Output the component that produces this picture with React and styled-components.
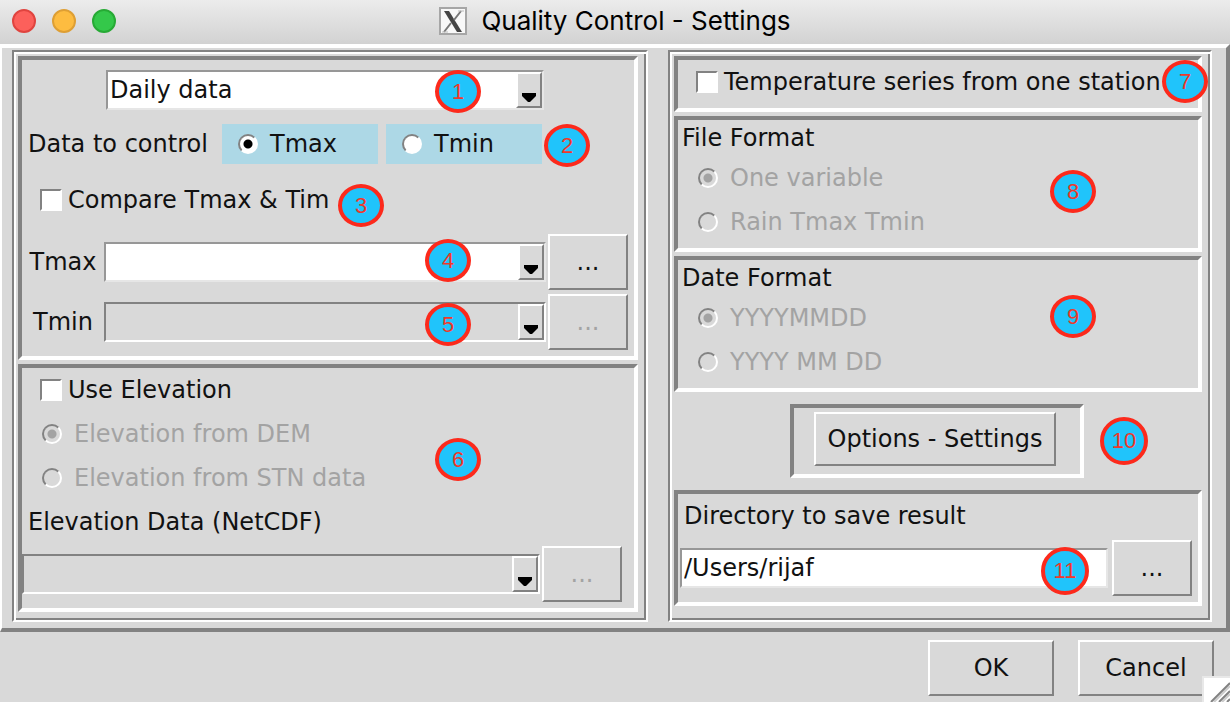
import React from "react";
import styled, { createGlobalStyle, css } from "styled-components";

const face = "#d9d9d9";
const shade = "#828282";
const muted = "#a3a3a3";

const GlobalStyle = createGlobalStyle`
  *, *::before, *::after { box-sizing: border-box; }
  body { margin: 0; background: ${face}; }
  body, button, input, select {
    font-family: "DejaVu Sans", Verdana, sans-serif;
    font-size: 24px;
    color: #111;
  }
`;

const sunken = css`
  border-style: solid;
  border-color: ${shade} #fff #fff ${shade};
`;

const raised = css`
  border-style: solid;
  border-color: #fff ${shade} ${shade} #fff;
`;

const Window = styled.main`
  display: flex;
  flex-direction: column;
  min-height: 100vh;
  background: ${face};
`;

const TitleBar = styled.header`
  display: grid;
  grid-template-columns: 1fr auto 1fr;
  align-items: center;
  height: 44px;
  padding: 0 12px 2px;
  background: linear-gradient(#ececec, #d2d2d2);
`;

const Lights = styled.div`
  display: flex;
  gap: 16px;
`;

const Light = styled.button`
  width: 24px;
  height: 24px;
  padding: 0;
  border: 2px solid ${(p) => p.$rim};
  border-radius: 50%;
  background: ${(p) => p.$fill};
`;

const Title = styled.h1`
  display: flex;
  align-items: center;
  gap: 14px;
  margin: 0;
  font: 400 26px/30px Inter, "Liberation Sans", sans-serif;
  color: #000;
`;

const Body = styled.form`
  display: grid;
  grid-template-columns: minmax(0, 636fr) minmax(0, 544fr);
  gap: 20px;
  padding: 2px 14px 6px 10px;
  border-style: solid;
  border-width: 4px 4px 4px 2px;
  border-color: #fff ${shade} ${shade} #fff;
`;

const Column = styled.section`
  ${sunken}
  border-width: 2px;
  box-shadow: inset 2px 2px #fff, inset -2px -2px ${shade};
  display: flex;
  flex-direction: column;
  gap: 4px;
  padding: 4px 8px 8px 4px;
`;

const Panel = styled.div`
  ${sunken}
  border-width: 4px;
  position: relative;
  padding-bottom: ${(p) => p.$bottom || 6}px;
`;

const Badge = styled.span`
  position: absolute;
  top: ${(p) => p.$top}px;
  right: ${(p) => p.$right}px;
  display: flex;
  align-items: center;
  justify-content: center;
  width: ${(p) => (p.$large ? 48 : 46)}px;
  height: ${(p) => (p.$large ? 48 : 43)}px;
  border: 4px solid #fc2a1c;
  border-radius: 50%;
  background: #20c4fb;
  color: #f0382a;
  font: 22px/24px "Liberation Sans", Arial, sans-serif;
  pointer-events: none;
`;

const Heading = styled.div`
  padding-left: ${(p) => p.$inset || 4}px;
  line-height: ${(p) => (p.$tight ? 36 : 44)}px;
`;

const Choice = styled.label`
  display: flex;
  align-items: center;
  gap: ${(p) => (p.$check ? 6 : 12)}px;
  height: 44px;
  padding-left: ${(p) => p.$inset || 20}px;
  color: ${(p) => (p.$off ? muted : "#111")};
  white-space: nowrap;
`;

const Radio = styled.input.attrs({ type: "radio" })`
  appearance: none;
  flex: none;
  width: 20px;
  height: 20px;
  margin: 0;
  border: 2px solid;
  border-color: ${shade} #fff #fff ${shade};
  border-radius: 50%;
  background: #fff;
  &:checked { background: radial-gradient(circle, #000 4px, #fff 5px); }
  &:disabled { background: ${face}; }
  &:disabled:checked { background: radial-gradient(circle, ${muted} 4px, ${face} 5px); }
`;

const Check = styled.input.attrs({ type: "checkbox" })`
  appearance: none;
  flex: none;
  width: 22px;
  height: 22px;
  margin: 0;
  ${sunken}
  border-width: 2px;
  background: #fff;
`;

const PeriodRow = styled.div`
  padding: 10px 90px 0 84px;
`;

const VariableRow = styled.div`
  display: flex;
  gap: 8px;
  margin: 14px 92px 14px 0;
`;

const VariableLabel = styled.span`
  flex: none;
  width: 192px;
  padding-left: 6px;
  line-height: 40px;
`;

const Variable = styled(Choice)`
  flex: 1;
  height: 40px;
  padding-left: 16px;
  background: #add8e6;
`;

const FileRow = styled.div`
  display: flex;
  align-items: center;
  margin-top: ${(p) => p.$gap}px;
  padding-right: ${(p) => p.$end}px;
  padding-left: ${(p) => p.$start || 0}px;
`;

const FileLabel = styled.label`
  flex: none;
  width: 82px;
  text-align: center;
`;

const ComboBox = styled.div`
  display: grid;
  flex: 1;
  height: 40px;
  border: 2px solid;
  border-color: ${(p) =>
    p.$off ? `${shade} #fff #fff ${shade}` : "#979797 #e6e6e6 #e6e6e6 #979797"};
  background: ${(p) => (p.$off ? face : "#fff")};
`;

const ComboSelect = styled.select`
  grid-area: 1 / 1;
  appearance: none;
  width: 100%;
  padding: 0 30px 0 2px;
  border: 0;
  background: none;
  opacity: 1;
  line-height: 36px;
`;

const ComboArrow = styled.span`
  grid-area: 1 / 1;
  justify-self: end;
  display: flex;
  align-items: flex-end;
  justify-content: center;
  width: 26px;
  height: 36px;
  padding-bottom: 4px;
  ${raised}
  border-width: 2px;
  background: ${face};
  pointer-events: none;
`;

const Entry = styled.input`
  flex: 1;
  min-width: 0;
  height: 40px;
  padding: 0 2px;
  border: 2px solid;
  border-color: #979797 #e6e6e6 #e6e6e6 #979797;
  background: #fff;
`;

const Button = styled.button`
  flex: none;
  width: ${(p) => p.$width}px;
  height: ${(p) => p.$height || 56}px;
  padding: 0;
  ${raised}
  border-width: 2px;
  background: ${face};
  &:disabled { color: ${muted}; }
`;

const Browse = styled(Button).attrs({ type: "button", $width: 80 })`
  margin-left: ${(p) => p.$gap || 2}px;
`;

const OptionsArea = styled.div`
  position: relative;
  display: flex;
  justify-content: center;
  padding: 8px 2px 8px 0;
`;

const OptionsFrame = styled.div`
  ${sunken}
  border-width: 4px;
  padding: 4px 24px 8px 20px;
`;

const Footer = styled.footer`
  position: relative;
  display: flex;
  flex: 1;
  justify-content: flex-end;
  gap: 24px;
  padding: 8px 16px 6px;
`;

const Grip = styled.svg`
  position: absolute;
  right: 0;
  bottom: 0;
`;

function Combo({ id, label, off, options = [""] }) {
  return (
    <ComboBox $off={off}>
      <ComboSelect id={id} aria-label={label} disabled={off}>
        {options.map((o) => (
          <option key={o}>{o}</option>
        ))}
      </ComboSelect>
      <ComboArrow>
        <svg width="14" height="9" viewBox="0 0 14 9" aria-hidden="true">
          <path d="M0 0H14V3L8 9H6L0 3Z" />
        </svg>
      </ComboArrow>
    </ComboBox>
  );
}

function XLogo() {
  return (
    <svg width="28" height="28" viewBox="0 0 28 28" aria-hidden="true">
      <rect x="1" y="1" width="26" height="26" fill="#f8f8f8" stroke="#a6a6a6" strokeWidth="2" />
      <path d="M5 4H10L23 25H18Z" fill="#444" />
      <path d="M22 4L15 13M12 16L5 25" stroke="#777" strokeWidth="2" fill="none" />
      <path d="M3 25H9M19 4H25" stroke="#bbb" strokeWidth="1" />
    </svg>
  );
}

export default function App() {
  return (
    <Window>
      <GlobalStyle />
      <TitleBar>
        <Lights>
          <Light aria-label="Close" $fill="#fc605b" $rim="#e0443f" />
          <Light aria-label="Minimize" $fill="#fdbc40" $rim="#de9f34" />
          <Light aria-label="Zoom" $fill="#34c84a" $rim="#27aa35" />
        </Lights>
        <Title>
          <XLogo />
          Quality Control - Settings
        </Title>
      </TitleBar>

      <Body id="settings">
        <Column>
          <Panel>
            <PeriodRow>
              <Combo label="Time step" options={["Daily data"]} />
            </PeriodRow>
            <VariableRow role="radiogroup" aria-labelledby="variable">
              <VariableLabel id="variable">Data to control</VariableLabel>
              <Variable>
                <Radio name="variable" defaultChecked />
                Tmax
              </Variable>
              <Variable>
                <Radio name="variable" />
                Tmin
              </Variable>
            </VariableRow>
            <Choice $check $inset={18}>
              <Check />
              Compare Tmax &amp; Tim
            </Choice>
            <FileRow $gap={12} $end={6}>
              <FileLabel htmlFor="tmax">Tmax</FileLabel>
              <Combo id="tmax" />
              <Browse aria-label="Browse Tmax">...</Browse>
            </FileRow>
            <FileRow $gap={4} $end={6}>
              <FileLabel htmlFor="tmin">Tmin</FileLabel>
              <Combo id="tmin" off />
              <Browse aria-label="Browse Tmin" disabled>...</Browse>
            </FileRow>
            <Badge $top={10} $right={153}>1</Badge>
            <Badge $top={64} $right={44}>2</Badge>
            <Badge $top={124} $right={250}>3</Badge>
            <Badge $top={179} $right={163}>4</Badge>
            <Badge $top={243} $right={163}>5</Badge>
          </Panel>

          <Panel>
            <Choice $check $inset={18}>
              <Check />
              Use Elevation
            </Choice>
            <Choice $off>
              <Radio name="elevation" disabled defaultChecked />
              Elevation from DEM
            </Choice>
            <Choice $off>
              <Radio name="elevation" disabled />
              Elevation from STN data
            </Choice>
            <Heading $inset={6}>
              <label htmlFor="netcdf">Elevation Data (NetCDF)</label>
            </Heading>
            <FileRow $gap={2} $end={12}>
              <Combo id="netcdf" off />
              <Browse aria-label="Browse elevation data" disabled>...</Browse>
            </FileRow>
            <Badge $top={70} $right={153}>6</Badge>
          </Panel>
        </Column>

        <Column>
          <Panel $bottom={4}>
            <Choice $check $inset={18}>
              <Check />
              Temperature series from one station
            </Choice>
            <Badge $top={0} $right={-10}>7</Badge>
          </Panel>

          <Panel $bottom={4} role="radiogroup" aria-labelledby="file-format">
            <Heading $tight id="file-format">File Format</Heading>
            <Choice $off>
              <Radio name="file" disabled defaultChecked />
              One variable
            </Choice>
            <Choice $off>
              <Radio name="file" disabled />
              Rain Tmax Tmin
            </Choice>
            <Badge $top={50} $right={102}>8</Badge>
          </Panel>

          <Panel $bottom={4} role="radiogroup" aria-labelledby="date-format">
            <Heading $tight id="date-format">Date Format</Heading>
            <Choice $off>
              <Radio name="date" disabled defaultChecked />
              YYYYMMDD
            </Choice>
            <Choice $off>
              <Radio name="date" disabled />
              YYYY MM DD
            </Choice>
            <Badge $top={35} $right={102}>9</Badge>
          </Panel>

          <OptionsArea>
            <OptionsFrame>
              <Button type="button" $width={242} $height={54}>Options - Settings</Button>
            </OptionsFrame>
            <Badge $large $top={21} $right={54}>10</Badge>
          </OptionsArea>

          <Panel>
            <Heading $inset={6}>
              <label htmlFor="directory">Directory to save result</label>
            </Heading>
            <FileRow $gap={2} $start={2} $end={6}>
              <Entry id="directory" defaultValue="/Users/rijaf" />
              <Browse $gap={4} aria-label="Browse directory">...</Browse>
            </FileRow>
            <Badge $large $top={53} $right={109}>11</Badge>
          </Panel>
        </Column>
      </Body>

      <Footer>
        <Button form="settings" type="button" $width={126}>OK</Button>
        <Button form="settings" type="button" $width={136}>Cancel</Button>
        <Grip width="28" height="26" viewBox="0 0 28 26" aria-hidden="true">
          <path d="M0 0H28V26H0Z" fill="#e8e8e8" />
          <path d="M2 2H28V26H2Z" fill="#fff" />
          <path d="M12 26L28 10M20 26L28 18" stroke="#ccc" strokeWidth="2" />
          <path d="M9 26L28 7M17 26L28 15M25 26L28 23" stroke="#828282" strokeWidth="2" />
        </Grip>
      </Footer>
    </Window>
  );
}
